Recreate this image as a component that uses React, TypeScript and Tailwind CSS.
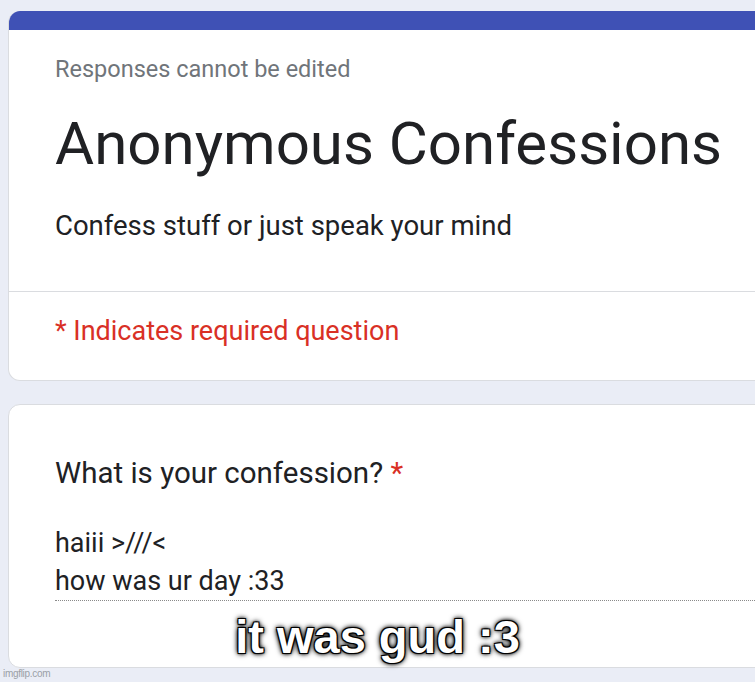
export default function App() {
    return (
        <div className="relative h-[682px] w-[755px] overflow-hidden bg-[#eaedf6] pl-[8px] pt-[11px] font-['Roboto',sans-serif]">
            {/* Header card */}
            <div className="w-[800px] overflow-hidden rounded-l-[12px] border border-t-0 border-[#dadce0] bg-white">
                <div className="h-[19px] bg-[#3f51b5]" />
                <div className="pl-[46px] pt-[25px]">
                    <div className="text-[23.5px] leading-[28px] text-[#70757a]">Responses cannot be edited</div>
                    <div className="mt-[25px] text-[60px] leading-[72px] text-[#202124]">Anonymous Confessions</div>
                    <div className="mt-[30px] text-[27.5px] leading-[32px] text-[#202124]">Confess stuff or just speak your mind</div>
                </div>
                <div className="mt-[49px] border-t border-[#dadce0]" />
                <div className="pb-[33px] pl-[46px] pt-[23px] text-[27px] leading-[32px] text-[#d93025]">
                    * Indicates required question
                </div>
            </div>

            {/* Question card */}
            <div className="mt-[23px] h-[264px] w-[800px] rounded-l-[12px] border border-[#dadce0] bg-white pl-[46px] pt-[50px]">
                <div className="text-[29.5px] leading-[36px] text-[#202124]">
                    What is your confession? <span className="text-[#d93025]">*</span>
                </div>
                <div className="mt-[33px] text-[27px] leading-[38px] text-[#202124]">
                    <div>haiii &gt;///&lt;</div>
                    <div>how was ur day :33</div>
                </div>
                <div className="border-b border-dotted border-[#8a8a8a]" />
            </div>

            {/* Meme caption */}
            <div
                className="absolute left-0 right-0 top-[609px] text-center font-['Liberation_Sans',sans-serif] text-[47px] font-bold leading-[56px] text-white"
                style={{ textShadow: '1px 1px 0 #000, -1px -1px 0 #000, 1px -1px 0 #000, -1px 1px 0 #000, 0 0 3px #000, 0 0 5px #000, 0 0 6px #000' }}
            >
                it was gud :3
            </div>

            <div className="absolute left-[3px] top-[666px] font-['Liberation_Sans',sans-serif] text-[10px] tracking-[-0.3px] text-[#9aa0a6]">
                imgflip.com
            </div>
        </div>
    );
}
